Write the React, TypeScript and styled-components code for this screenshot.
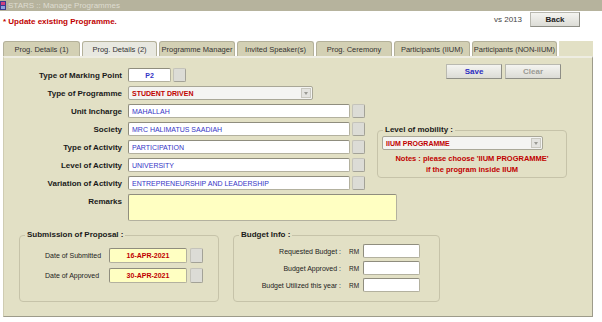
import { Fragment } from "react";
import styled, { createGlobalStyle } from "styled-components";

const GlobalStyle = createGlobalStyle`
  html, body {
    margin: 0;
    padding: 0;
    background: #ffffff;
  }
  * {
    box-sizing: border-box;
  }
`;

// Window frame
const Window = styled.div`
  width: 602px;
  height: 322px;
  overflow: hidden;
  background: #ffffff;
  font-family: "Liberation Sans", Arial, sans-serif;
  color: #1a1a1a;
`;

const TitleBar = styled.div`
  height: 11px;
  background: #b6b39d;
  display: flex;
  align-items: center;
  gap: 2px;
  font-size: 8px;
  color: #dedcd0;
  white-space: nowrap;
`;

const Header = styled.div`
  height: 29px;
  display: flex;
  align-items: flex-start;
  justify-content: space-between;
  padding: 1px 22px 0 3px;
`;

const Notice = styled.div`
  margin-top: 5px;
  font-size: 8px;
  font-weight: bold;
  color: #c00000;
`;

const HeaderRight = styled.div`
  display: flex;
  align-items: center;
  gap: 8px;
`;

const Version = styled.span`
  font-size: 8px;
  color: #444;
`;

// Push buttons
const PushButton = styled.button<{ $w: number; $tone?: "blue" | "dim" | "dark" }>`
  width: ${(p) => p.$w}px;
  height: 15px;
  padding: 0;
  border: 1px solid #b9b9b0;
  border-right-color: #8e8e86;
  border-bottom-color: #8e8e86;
  background: linear-gradient(#f4f4f0, #dcdcd6);
  font-family: "Liberation Sans", Arial, sans-serif;
  font-size: 8px;
  font-weight: bold;
  color: ${(p) =>
    p.$tone === "blue" ? "#2b2bc0" : p.$tone === "dim" ? "#9a9a94" : "#222"};
`;

// Tabs
const TabStrip = styled.div`
  height: 16px;
  display: flex;
  align-items: flex-end;
  padding-left: 3px;
  padding-right: 9px;
  gap: 2px;
`;

const Tab = styled.div<{ $w: number; $active?: boolean }>`
  width: ${(p) => p.$w}px;
  height: 15px;
  display: flex;
  align-items: center;
  justify-content: center;
  font-size: 7.5px;
  color: #333;
  white-space: nowrap;
  border: 1px solid #b4b19a;
  border-bottom: none;
  border-radius: 3px 3px 0 0;
  background: ${(p) => (p.$active ? "#e8e8e0" : "#d3d0b4")};
`;

const TabFiller = styled.div`
  flex: 1;
  height: 15px;
  background: #e2e0c5;
`;

// Main panel
const Panel = styled.div`
  margin-left: 3px;
  width: 590px;
  height: 261px;
  background: #e2e0c5;
  border: 1px solid #cfccb2;
  border-right-color: #9d9b8a;
  border-bottom-color: #9d9b8a;
  border-top: 2px solid #eeede2;
  display: flex;
  flex-direction: column;
`;

const TopSection = styled.div`
  display: flex;
  align-items: flex-start;
`;

const FieldGrid = styled.div`
  margin-top: 10px;
  display: grid;
  grid-template-columns: 118px auto;
  column-gap: 6px;
  row-gap: 4px;
  align-items: center;
`;

const Label = styled.div`
  font-size: 8px;
  font-weight: bold;
  text-align: right;
  white-space: nowrap;
`;

const Controls = styled.div`
  display: flex;
  align-items: center;
  gap: 2px;
`;

const TextBox = styled.div<{
  $w: number;
  $h?: number;
  $color?: string;
  $bg?: string;
  $center?: boolean;
  $bold?: boolean;
}>`
  width: ${(p) => p.$w}px;
  height: ${(p) => p.$h ?? 14}px;
  display: flex;
  align-items: center;
  justify-content: ${(p) => (p.$center ? "center" : "flex-start")};
  padding: 0 3px;
  background: ${(p) => p.$bg ?? "#ffffff"};
  border: 1px solid #b3b19f;
  border-top-color: #8f8d7e;
  border-left-color: #8f8d7e;
  border-radius: 2px;
  font-size: 7px;
  font-weight: ${(p) => (p.$bold ? "bold" : "normal")};
  color: ${(p) => p.$color ?? "#3535c6"};
  white-space: nowrap;
  overflow: hidden;
`;

const PickButton = styled.div<{ $h?: number }>`
  width: 13px;
  height: ${(p) => p.$h ?? 14}px;
  background: #dcdcd6;
  border: 1px solid #c4c3ba;
  border-right-color: #a3a297;
  border-bottom-color: #a3a297;
  border-radius: 2px;
`;

const SelectBox = styled.div<{ $w: number }>`
  width: ${(p) => p.$w}px;
  height: 14px;
  display: flex;
  align-items: center;
  justify-content: space-between;
  padding: 0 1px 0 3px;
  background: #f4f4f2;
  border: 1px solid #a9a797;
  border-radius: 2px;
  font-size: 7px;
  font-weight: bold;
  color: #c00000;
`;

const SelectArrow = styled.div`
  width: 10px;
  height: 10px;
  background: #e4e4e0;
  border: 1px solid #c9c8c0;
  display: flex;
  align-items: center;
  justify-content: center;
  &::after {
    content: "";
    border-left: 2px solid transparent;
    border-right: 2px solid transparent;
    border-top: 3px solid #9a9a94;
  }
`;

const SideColumn = styled.div`
  margin-left: 12px;
  width: 190px;
  display: flex;
  flex-direction: column;
`;

const ActionRow = styled.div`
  margin-top: 6px;
  padding-right: 6px;
  display: flex;
  justify-content: flex-end;
  gap: 3px;
`;

// Group boxes
const GroupBox = styled.fieldset<{ $w: number }>`
  width: ${(p) => p.$w}px;
  margin: 0;
  padding: 0;
  border: 1px solid #c6c3a9;
  border-radius: 4px;
  min-width: 0;
`;

const GroupTitle = styled.legend`
  padding: 0 2px;
  margin-left: 5px;
  font-size: 8px;
  font-weight: bold;
  line-height: 10px;
`;

const MobilityBox = styled(GroupBox)`
  margin-top: 46px;
  padding: 1px 4px 2px 4px;
`;

const MobilityTitle = styled(GroupTitle)`
  margin-left: 1px;
`;

const MobilityNote = styled.div`
  margin-top: 3px;
  font-size: 7.5px;
  font-weight: bold;
  color: #c00000;
  text-align: center;
  line-height: 11px;
`;

const RemarksRow = styled.div`
  margin-top: 4px;
  display: grid;
  grid-template-columns: 118px auto;
  column-gap: 6px;
  align-items: start;
`;

const RemarksLabel = styled(Label)`
  padding-top: 3px;
`;

const RemarksArea = styled.div`
  width: 269px;
  height: 27px;
  background: #ffffc2;
  border: 1px solid #b3b19f;
  border-top-color: #8f8d7e;
  border-left-color: #8f8d7e;
  border-radius: 2px;
`;

const BottomSection = styled.div`
  margin-top: 9px;
  padding-left: 15px;
  display: flex;
  gap: 14px;
  align-items: flex-start;
`;

const SubmissionGrid = styled.div`
  padding: 8px 0 18px 25px;
  display: grid;
  grid-template-columns: 61px 78px 13px;
  column-gap: 3px;
  row-gap: 5px;
  align-items: center;
`;

const SmallLabel = styled.div<{ $right?: boolean }>`
  font-size: 7px;
  color: #222;
  white-space: nowrap;
  text-align: ${(p) => (p.$right ? "right" : "left")};
`;

const BudgetGrid = styled.div`
  padding: 4px 0 9px 9px;
  display: grid;
  grid-template-columns: 98px 16px 57px;
  column-gap: 3px;
  row-gap: 3px;
  align-items: center;
`;

const RmText = styled.span`
  font-size: 6.5px;
  color: #222;
  margin-left: 5px;
`;

const AppIcon = () => (
  <svg width="6" height="9" viewBox="0 0 6 9">
    <rect width="6" height="9" fill="#3a3a8c" />
    <rect x="1" y="1" width="4" height="3" fill="#d04080" />
    <rect x="1" y="5" width="4" height="3" fill="#8ea0e0" />
  </svg>
);

const tabs = [
  { label: "Prog. Details (1)", w: 77 },
  { label: "Prog. Details (2)", w: 75, active: true },
  { label: "Programme Manager", w: 76 },
  { label: "Invited Speaker(s)", w: 77 },
  { label: "Prog. Ceremony", w: 76 },
  { label: "Participants (IIUM)", w: 76 },
  { label: "Participants (NON-IIUM)", w: 85 },
];

const textFields = [
  { label: "Unit Incharge", value: "MAHALLAH" },
  { label: "Society", value: "MRC HALIMATUS SAADIAH" },
  { label: "Type of Activity", value: "PARTICIPATION" },
  { label: "Level of Activity", value: "UNIVERSITY" },
  { label: "Variation of Activity", value: "ENTREPRENEURSHIP AND LEADERSHIP" },
];

const budgetRows = [
  "Requested Budget :",
  "Budget Approved :",
  "Budget Utilized this year :",
];

export default function App() {
  return (
    <Window>
      <GlobalStyle />
      <TitleBar>
        <AppIcon />
        STARS :: Manage Programmes
      </TitleBar>
      <Header>
        <Notice>* Update existing Programme.</Notice>
        <HeaderRight>
          <Version>vs 2013</Version>
          <PushButton $w={50} $tone="dark">
            Back
          </PushButton>
        </HeaderRight>
      </Header>

      <TabStrip>
        {tabs.map((t) => (
          <Tab key={t.label} $w={t.w} $active={t.active}>
            {t.label}
          </Tab>
        ))}
        <TabFiller />
      </TabStrip>

      <Panel>
        <TopSection>
          <FieldGrid>
            <Label>Type of Marking Point</Label>
            <Controls>
              <TextBox $w={43} $center $bold>
                P2
              </TextBox>
              <PickButton />
            </Controls>

            <Label>Type of Programme</Label>
            <Controls>
              <SelectBox $w={185}>
                STUDENT DRIVEN
                <SelectArrow />
              </SelectBox>
            </Controls>

            {textFields.map((f) => (
              <Fragment key={f.label}>
                <Label>{f.label}</Label>
                <Controls>
                  <TextBox $w={222}>{f.value}</TextBox>
                  <PickButton />
                </Controls>
              </Fragment>
            ))}
          </FieldGrid>

          <SideColumn>
            <ActionRow>
              <PushButton $w={56} $tone="blue">
                Save
              </PushButton>
              <PushButton $w={56} $tone="dim">
                Clear
              </PushButton>
            </ActionRow>
            <MobilityBox $w={190}>
              <MobilityTitle>Level of mobility :</MobilityTitle>
              <SelectBox $w={161}>
                IIUM PROGRAMME
                <SelectArrow />
              </SelectBox>
              <MobilityNote>
                Notes : please choose 'IIUM PROGRAMME'
                <br />
                if the program inside IIUM
              </MobilityNote>
            </MobilityBox>
          </SideColumn>
        </TopSection>

        <RemarksRow>
          <RemarksLabel>Remarks</RemarksLabel>
          <RemarksArea />
        </RemarksRow>

        <BottomSection>
          <GroupBox $w={200}>
            <GroupTitle>Submission of Proposal :</GroupTitle>
            <SubmissionGrid>
              <SmallLabel>Date of Submitted</SmallLabel>
              <TextBox $w={78} $h={15} $bg="#ffffc2" $color="#c00000" $center $bold>
                16-APR-2021
              </TextBox>
              <PickButton $h={15} />
              <SmallLabel>Date of Approved</SmallLabel>
              <TextBox $w={78} $h={15} $bg="#ffffc2" $color="#c00000" $center $bold>
                30-APR-2021
              </TextBox>
              <PickButton $h={15} />
            </SubmissionGrid>
          </GroupBox>

          <GroupBox $w={207}>
            <GroupTitle>Budget Info :</GroupTitle>
            <BudgetGrid>
              {budgetRows.map((r) => (
                <Fragment key={r}>
                  <SmallLabel $right>{r}</SmallLabel>
                  <RmText>RM</RmText>
                  <TextBox $w={57} $h={14} />
                </Fragment>
              ))}
            </BudgetGrid>
          </GroupBox>
        </BottomSection>
      </Panel>
    </Window>
  );
}
